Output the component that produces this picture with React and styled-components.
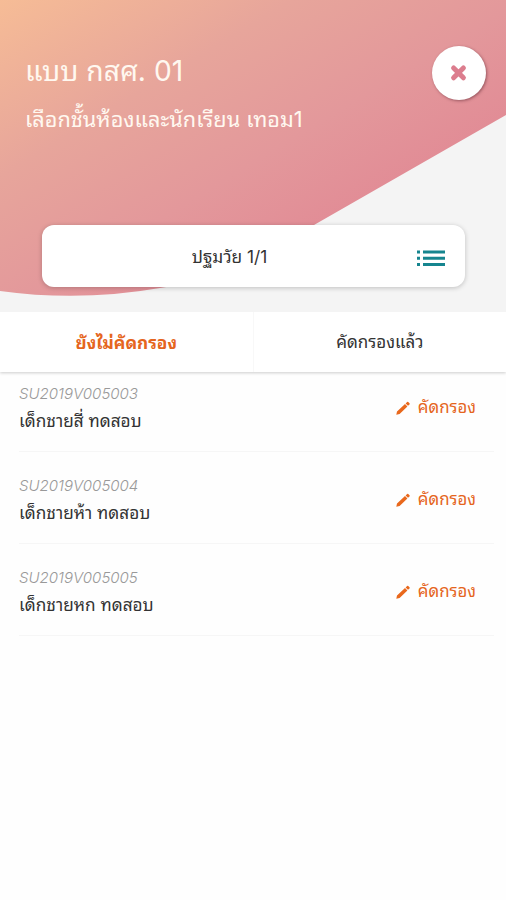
import styled, { createGlobalStyle } from "styled-components";
import { useState } from "react";

const STUDENTS = [
  { id: "SU2019V005003", name: "เด็กชายสี่ ทดสอบ" },
  { id: "SU2019V005004", name: "เด็กชายห้า ทดสอบ" },
  { id: "SU2019V005005", name: "เด็กชายหก ทดสอบ" },
];

export default function App() {
  const [tab, setTab] = useState("pending");

  return (
    <>
      <GlobalStyle />
      <StyledRoot>
        <StyledHeader>
          <HeaderBackground />
          <StyledTitleRow>
            <div>
              <StyledTitle>แบบ กสศ. 01</StyledTitle>
              <StyledSubTitle>เลือกชั้นห้องและนักเรียน เทอม1</StyledSubTitle>
            </div>
            <StyledCloseButton aria-label="close">
              <CloseIcon />
            </StyledCloseButton>
          </StyledTitleRow>
          <StyledRoomSelect>
            <StyledRoomName>ปฐมวัย 1/1</StyledRoomName>
            <ListIcon />
          </StyledRoomSelect>
        </StyledHeader>
        <StyledTabs>
          <StyledTab
            $active={tab === "pending"}
            onClick={() => setTab("pending")}
          >
            ยังไม่คัดกรอง
          </StyledTab>
          <StyledTab $active={tab === "done"} onClick={() => setTab("done")}>
            คัดกรองแล้ว
          </StyledTab>
        </StyledTabs>
        <StyledList>
          {STUDENTS.map(({ id, name }) => (
            <StyledStudent key={id}>
              <div>
                <StyledStudentId>{id}</StyledStudentId>
                <StyledStudentName>{name}</StyledStudentName>
              </div>
              <StyledScreenButton>
                <PencilIcon />
                คัดกรอง
              </StyledScreenButton>
            </StyledStudent>
          ))}
        </StyledList>
      </StyledRoot>
    </>
  );
}

function HeaderBackground() {
  return (
    <StyledBackground viewBox="0 0 506 312">
      <defs>
        <linearGradient
          id="sunset"
          gradientUnits="userSpaceOnUse"
          x1="0"
          y1="0"
          x2="205"
          y2="340"
        >
          <stop offset="0" stopColor="#f6bc96" />
          <stop offset="0.38" stopColor="#e7a59b" />
          <stop offset="0.68" stopColor="#e3989b" />
          <stop offset="1" stopColor="#e18894" />
        </linearGradient>
      </defs>
      <path
        d="M0 0H506V115L314 225Q222 280 160 288Q80 302 0 291Z"
        fill="url(#sunset)"
      />
    </StyledBackground>
  );
}

function CloseIcon() {
  return (
    <svg width="18" height="18" viewBox="0 0 18 18">
      <path
        d="M3.6 4 13.4 13.8M13.4 4 3.6 13.8"
        stroke="#dc7d8e"
        strokeWidth="5"
        strokeLinecap="round"
      />
    </svg>
  );
}

function ListIcon() {
  return (
    <svg width="28" height="17" viewBox="0 0 28 17" fill="#16858f">
      <path d="M0 .5h3v3H0zM6 .5h22v3H6zM0 6.8h3v3H0zM6 6.8h22v3H6zM0 13.1h3v3H0zM6 13.1h22v3H6z" />
    </svg>
  );
}

function PencilIcon() {
  return (
    <svg width="14" height="14" viewBox="0 0 14 14" fill="#e9681c">
      <path d="M.3 13.7 1 10.6 9 3l2.4 2.4L3.6 13zM9.6 2.4l1.5-1.4q.6-.5 1.1 0l1.3 1.3q.5.6 0 1.1L12 4.8z" />
    </svg>
  );
}

const GlobalStyle = createGlobalStyle`
  * {
    box-sizing: border-box;
  }
  body {
    margin: 0;
    background: #fff;
    font-family: Inter, "Noto Sans Thai Looped", Loma, Garuda, Waree, "Noto Sans Thai", sans-serif;
  }
  button {
    border: none;
    padding: 0;
    font-family: inherit;
    cursor: pointer;
  }
  p, h1 {
    margin: 0;
    white-space: nowrap;
  }
`;

const StyledRoot = styled.div`
  min-height: 900px;
  background: #fefefe;
`;

const StyledHeader = styled.header`
  position: relative;
  height: 312px;
  padding: 45px 19px 0 25px;
  background: #f4f4f4;
`;

const StyledBackground = styled.svg`
  position: absolute;
  top: 0;
  left: 0;
  width: 100%;
  height: 312px;
`;

const StyledTitleRow = styled.div`
  position: relative;
  display: flex;
  justify-content: space-between;
  align-items: flex-start;
  height: 180px;
`;

const StyledTitle = styled.h1`
  height: 52px;
  line-height: 53px;
  font-size: 28.2px;
  font-weight: 400;
  color: #fff8f0;
`;

const StyledSubTitle = styled.p`
  height: 44px;
  line-height: 44px;
  font-size: 21.7px;
  color: #fff8f0;
`;

const StyledCloseButton = styled.button`
  display: flex;
  justify-content: center;
  align-items: center;
  width: 54px;
  height: 54px;
  margin: 1px 1px 0 0;
  border-radius: 50%;
  background: #fff;
  box-shadow: 1px 1px 3px rgba(80, 30, 40, 0.5);
`;

const StyledRoomSelect = styled.div`
  position: relative;
  display: flex;
  align-items: center;
  width: 423px;
  height: 62px;
  margin-left: 17px;
  padding: 4px 20px 0 0;
  border-radius: 12px;
  background: #fff;
  box-shadow: 0 1px 5px rgba(0, 0, 0, 0.22);
`;

const StyledRoomName = styled.p`
  flex: 1;
  height: 58px;
  text-align: center;
  line-height: 56px;
  font-size: 17.3px;
  color: #333;
`;

const StyledTabs = styled.nav`
  display: flex;
  height: 60px;
  background: #fff;
  box-shadow: 0 1px 3px rgba(0, 0, 0, 0.2);
`;

const StyledTab = styled.button`
  flex: 1;
  padding-bottom: 3px;
  background: none;
  font-size: ${({ $active }) => ($active ? "17.2px" : "17px")};
  font-weight: ${({ $active }) => ($active ? 700 : 400)};
  color: ${({ $active }) => ($active ? "#e5651d" : "#333")};
  & + & {
    border-left: 1px solid #f8f8f8;
  }
`;

const StyledList = styled.div`
  padding: 0 12px 0 19px;
`;

const StyledStudent = styled.div`
  display: flex;
  justify-content: space-between;
  height: 92px;
  padding: 23px 18px 0 0;
  border-bottom: 1px solid #f6f6f6;
  &:first-child {
    height: 80px;
    padding-top: 11px;
  }
`;

const StyledStudentId = styled.p`
  line-height: 22px;
  font-size: 15.05px;
  font-style: italic;
  font-weight: 300;
  color: #999;
`;

const StyledStudentName = styled.p`
  line-height: 31px;
  font-size: 17.2px;
  color: #333;
`;

const StyledScreenButton = styled.button`
  display: flex;
  align-items: center;
  gap: 8px;
  height: 45px;
  background: none;
  font-size: 16.8px;
  color: #e5651d;
  svg {
    margin-top: 4px;
  }
`;
